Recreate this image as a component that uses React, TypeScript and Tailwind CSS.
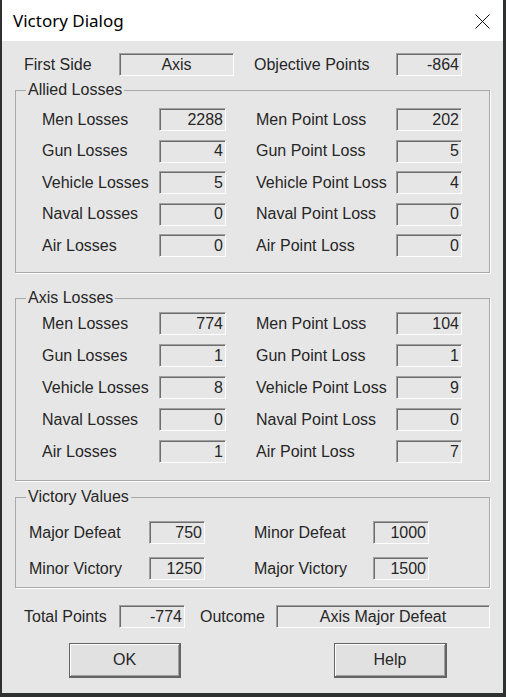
import React from "react";

const FONT = "font-['Liberation_Sans',Arial,sans-serif]";

type Pair = [string, string];

const Field: React.FC<{ value: string; w: string; center?: boolean }> = ({ value, w, center }) => (
  <div
    className={`${w} h-[23px] flex items-center ${center ? "justify-center" : "justify-end pr-[2px]"} border-t border-l border-r border-b border-t-[#a0a0a0] border-l-[#a0a0a0] border-r-white border-b-white shadow-[inset_1px_1px_0_#6d6d6d] text-[16px] leading-none text-[#262626]`}
  >
    {value}
  </div>
);

const LossRow: React.FC<{ left: Pair; right: Pair }> = ({ left, right }) => (
  <div className="flex items-center h-[23px]">
    <span className="w-[117px]">{left[0]}</span>
    <Field value={left[1]} w="w-[67px]" />
    <span className="ml-[30px] w-[140px]">{right[0]}</span>
    <Field value={right[1]} w="w-[66px]" />
  </div>
);

const Group: React.FC<{ title: string; className: string; children: React.ReactNode }> = ({
  title,
  className,
  children,
}) => (
  <fieldset className={`w-[475px] border border-[#a9a9a9] shadow-[1px_1px_0_#fff] ${className}`}>
    <legend className="ml-[10px] px-[2px] leading-[18px] text-[16px]">{title}</legend>
    {children}
  </fieldset>
);

const allied: [Pair, Pair][] = [
  [["Men Losses", "2288"], ["Men Point Loss", "202"]],
  [["Gun Losses", "4"], ["Gun Point Loss", "5"]],
  [["Vehicle Losses", "5"], ["Vehicle Point Loss", "4"]],
  [["Naval Losses", "0"], ["Naval Point Loss", "0"]],
  [["Air Losses", "0"], ["Air Point Loss", "0"]],
];

const axis: [Pair, Pair][] = [
  [["Men Losses", "774"], ["Men Point Loss", "104"]],
  [["Gun Losses", "1"], ["Gun Point Loss", "1"]],
  [["Vehicle Losses", "8"], ["Vehicle Point Loss", "9"]],
  [["Naval Losses", "0"], ["Naval Point Loss", "0"]],
  [["Air Losses", "1"], ["Air Point Loss", "7"]],
];

const Button: React.FC<{ label: string; w: string; className?: string }> = ({ label, w, className }) => (
  <button
    className={`${w} h-[35px] bg-[#e1e1e1] border border-[#646464] border-r-2 border-b-2 shadow-[inset_1px_1px_0_#fff,inset_-1px_-1px_0_#a0a0a0] text-[16px] text-[#262626] ${className ?? ""}`}
  >
    {label}
  </button>
);

export default function App() {
  return (
    <div className={`w-[506px] h-[697px] flex flex-col border-l-2 border-r-[3px] border-b-[4px] border-[#2e3130] bg-[#e6e6e6] text-[#262626] text-[16px] ${FONT}`}>
      {/* Title bar */}
      <div className="h-[41px] bg-white flex items-center justify-between pl-[11px] pr-[13px]">
        <span className="font-['Noto_Sans',sans-serif] text-[17px] text-black">Victory Dialog</span>
        <svg width="15" height="15" viewBox="0 0 15 15" className="mt-[1px]">
          <path d="M0.5 0.5 L14.5 14.5 M14.5 0.5 L0.5 14.5" stroke="#111" strokeWidth="1" />
        </svg>
      </div>

      <div className="flex flex-col pl-[13px]">
        {/* First side */}
        <div className="flex items-center h-[23px] mt-[12px] pl-[9px]">
          <span className="w-[95px]">First Side</span>
          <Field value="Axis" w="w-[115px]" center />
          <span className="ml-[20px] w-[142px]">Objective Points</span>
          <Field value="-864" w="w-[66px]" />
        </div>

        <Group title="Allied Losses" className="mt-[5px]">
          <div className="flex flex-col gap-[8.5px] pt-[9px] pb-[15px] pl-[26px]">
            {allied.map(([l, r]) => (
              <LossRow key={l[0]} left={l} right={r} />
            ))}
          </div>
        </Group>

        <Group title="Axis Losses" className="mt-[16px]">
          <div className="flex flex-col gap-[9px] pt-[5px] pb-[17px] pl-[26px]">
            {axis.map(([l, r]) => (
              <LossRow key={l[0]} left={l} right={r} />
            ))}
          </div>
        </Group>

        <Group title="Victory Values" className="mt-[7px]">
          <div className="flex flex-col gap-[13px] pt-[15px] pb-[7px] pl-[13px]">
            <div className="flex items-center h-[23px]">
              <span className="w-[120px]">Major Defeat</span>
              <Field value="750" w="w-[56px]" />
              <span className="ml-[49px] w-[119px]">Minor Defeat</span>
              <Field value="1000" w="w-[56px]" />
            </div>
            <div className="flex items-center h-[23px]">
              <span className="w-[120px]">Minor Victory</span>
              <Field value="1250" w="w-[56px]" />
              <span className="ml-[49px] w-[119px]">Major Victory</span>
              <Field value="1500" w="w-[56px]" />
            </div>
          </div>
        </Group>

        {/* Totals */}
        <div className="flex items-center h-[23px] mt-[17px] pl-[9px]">
          <span className="w-[95px]">Total Points</span>
          <Field value="-774" w="w-[66px]" />
          <span className="ml-[15px] w-[76px]">Outcome</span>
          <Field value="Axis Major Defeat" w="w-[214px]" center />
        </div>

        {/* Buttons */}
        <div className="flex mt-[15px] pl-[54px]">
          <Button label="OK" w="w-[112px]" />
          <Button label="Help" w="w-[113px]" className="ml-[153px]" />
        </div>
      </div>
    </div>
  );
}
